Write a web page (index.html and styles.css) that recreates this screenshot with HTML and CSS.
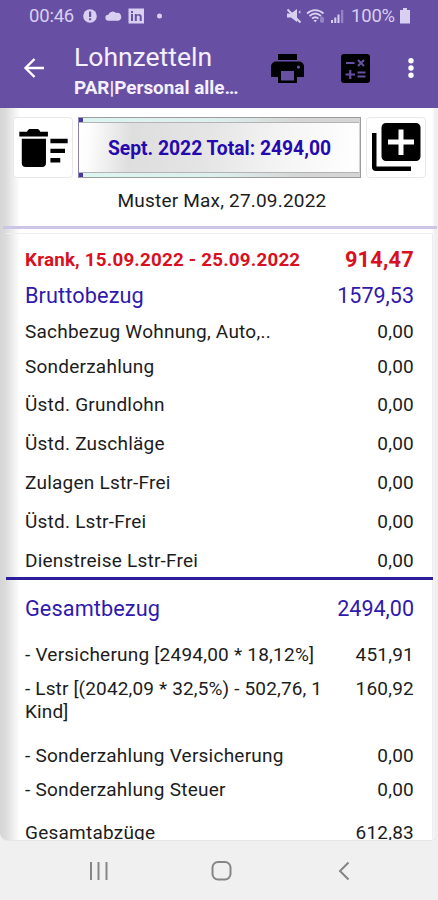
FILE: index.html
```html
<!DOCTYPE html>
<html lang="de">
<head>
<meta charset="utf-8">
<meta name="viewport" content="width=device-width, initial-scale=1">
<title>Lohnzetteln</title>
<link rel="stylesheet" href="styles.css">
</head>
<body>
<header class="top">
  <div class="status">
    <span class="clock">00:46</span>
    <svg class="notices" width="84" height="18" viewBox="0 0 84 18">
      <circle cx="7" cy="9" r="6.8"/><path class="cut" d="M6 4.500h2.200v5.500H6zM6 11.300h2.200v2H6z"/>
      <path d="M25.500 13.500a3.300 3.300 0 0 1-.2-6.600 5.300 5.300 0 0 1 8.800-1.800 4.300 4.300 0 0 1 2.400 8.400z" transform="translate(2.500 1.500) scale(.9)"/>
      <path d="M45.500 1.500h15.500v15H45.500z"/><path class="cut" d="M48 7h2v7h-2zM48 4h2v2h-2zM51.800 7h2v1c1.200-1.700 4.900-1.500 4.900 1.800V14h-2v-3.900c0-2-2.900-2-2.900 0V14h-2z"/>
      <circle cx="76.500" cy="9" r="2.500"/>
    </svg>
    <svg class="signals" width="60" height="18" viewBox="0 0 60 18">
      <path d="M1 6.500h4L11 2v13l-6-4.500H1z"/><path class="slash" d="M1.500 2.500l13 13"/><path d="M12.500 5l1.800-1.800v3.600z"/>
      <g class="wave"><path d="M21 6.500c5-4.600 11.500-4.600 16.500 0M23.500 9c3.500-3 8-3 11.500 0M26 11.500c2-1.600 4.500-1.600 6.500 0"/></g>
      <path d="M27.500 13h3.500l-1.800 2.500z"/><path class="dim" d="M34 11l2-2 2 2v4l-2 1-2-1z"/>
      <path d="M45 13h2v3h-2zM48.300 10.500h2V16h-2zM51.500 7.500h2V16h-2z"/><path class="dim" d="M55 3h2.300v13H55z"/>
    </svg>
    <span class="percent">100%</span>
    <svg class="battery" width="10" height="16" viewBox="0 0 10 16"><path d="M3 0h4v2h3v13.500H0V2h3z"/></svg>
  </div>
  <div class="appbar">
    <svg class="back" width="22" height="22" viewBox="0 0 22 22"><path d="M21 11H2.500M11.500 2L2.500 11l9 9"/></svg>
    <div class="titles">
      <h1>Lohnzetteln</h1>
      <p>PAR|Personal alle…</p>
    </div>
    <svg class="print" width="33" height="30" viewBox="0 0 33 30">
      <path d="M7 0h19v6H7z"/><path fill-rule="evenodd" d="M5 7.500h23a5 5 0 0 1 5 5V23h-7v6H7v-6H0V12.500a5 5 0 0 1 5-5zM10 17v9.500h13V17zM27.500 11.500a1.600 1.600 0 1 0 0 3.200 1.600 1.600 0 0 0 0-3.200z"/>
    </svg>
    <svg class="calc" width="29" height="29" viewBox="0 0 29 29">
      <rect width="29" height="29" rx="3"/><path d="M5 9h8.500M17 6l6 6M23 6l-6 6M4.500 20.500H14M9.250 16v9M16.500 18.500h8M16.500 22.500h8"/>
    </svg>
    <svg class="more" width="6" height="20" viewBox="0 0 6 20"><circle cx="3" cy="2.700" r="2.700"/><circle cx="3" cy="10" r="2.700"/><circle cx="3" cy="17.300" r="2.700"/></svg>
  </div>
</header>
<main class="content">
  <section class="period">
    <div class="controls">
      <button class="tool" aria-label="Löschen">
        <svg width="50" height="38" viewBox="-1 0 50 38.500"><path d="M0 2.800h8V2l2-2h9l2 2v.8h8V7.500H0zM2.500 10H27v24.500a4 4 0 0 1-4 4H6.500a4 4 0 0 1-4-4zM31.500 10H49v4.500H31.500zM31.500 20h14.800v4.200H31.500zM31.500 29.500h10V34h-10z"/></svg>
      </button>
      <button class="month"><span>Sept. 2022 Total: 2494,00</span></button>
      <button class="tool" aria-label="Hinzufügen">
        <svg width="50" height="50" viewBox="1 1 50 50"><path d="M2 11h4.500v33.500H41V49H6a4 4 0 0 1-4-4z"/><path fill-rule="evenodd" d="M16 1h30a4.500 4.500 0 0 1 4.500 4.500v29A4.500 4.500 0 0 1 46 39H16a4.500 4.500 0 0 1-4.500-4.500v-29A4.500 4.500 0 0 1 16 1zM28.500 7.500V17.500H18v5h10.500V33h5V22.500H44v-5H33.500V7.500z"/></svg>
      </button>
    </div>
    <p class="person">Muster Max, 27.09.2022</p>
  </section>
  <section class="sheet">
    <div class="row sick"><span>Krank, 15.09.2022 - 25.09.2022</span><b>914,47</b></div>
    <div class="row sum"><span>Bruttobezug</span><b>1579,53</b></div>
    <div class="row first"><span>Sachbezug Wohnung, Auto,..</span><b>0,00</b></div>
    <div class="row special"><span>Sonderzahlung</span><b>0,00</b></div>
    <div class="row"><span>Üstd. Grundlohn</span><b>0,00</b></div>
    <div class="row"><span>Üstd. Zuschläge</span><b>0,00</b></div>
    <div class="row"><span>Zulagen Lstr-Frei</span><b>0,00</b></div>
    <div class="row"><span>Üstd. Lstr-Frei</span><b>0,00</b></div>
    <div class="row last"><span>Dienstreise Lstr-Frei</span><b>0,00</b></div>
    <div class="row sum total"><span>Gesamtbezug</span><b>2494,00</b></div>
    <div class="row deduction"><span>- Versicherung [2494,00 * 18,12%]</span><b>451,91</b></div>
    <div class="row tax"><span>- Lstr [(2042,09 * 32,5%) - 502,76, 1<br>Kind]</span><b>160,92</b></div>
    <div class="row deduction"><span>- Sonderzahlung Versicherung</span><b>0,00</b></div>
    <div class="row deduction"><span>- Sonderzahlung Steuer</span><b>0,00</b></div>
    <div class="row result"><span>Gesamtabzüge</span><b>612,83</b></div>
  </section>
</main>
<nav class="navbar">
  <svg width="20" height="20" viewBox="0 0 20 20"><path d="M2 1v18M9.500 1v18M17.500 1v18"/></svg>
  <svg width="22" height="20" viewBox="0 0 22 20"><rect x="-.5" y="1" width="18" height="17.500" rx="5.500"/></svg>
  <svg width="12" height="20" viewBox="0 0 12 20"><path d="M10.500 1.500L2 10l8.500 8.500"/></svg>
</nav>
</body>
</html>
```
FILE: styles.css
```css
* { box-sizing: border-box; }
body {
  margin: 0;
  width: 438px;
  height: 900px;
  overflow: hidden;
  display: flex;
  flex-direction: column;
  background: #f0f0f0;
  color: #1c1c1c;
  font-family: Roboto, sans-serif;
}
h1, p { margin: 0; }
.top { height: 108px; background: #6750a4; flex: none; }
.status {
  height: 32px;
  padding: 0 27px 0 29px;
  display: flex;
  align-items: center;
  color: #d9cff0;
  fill: #d9cff0;
  font-size: 18.5px;
}
.clock { width: 54px; letter-spacing: -.2px; }
.cut { fill: #6750a4; }
.slash { fill: none; stroke: #d9cff0; stroke-width: 2; }
.wave { fill: none; stroke: #d9cff0; stroke-width: 1.8; }
.dim { opacity: .4; }
.signals { margin-left: auto; }
.percent { margin-left: 5px; width: 49px; letter-spacing: -.2px; }
.battery { margin-right: 1px; }
.appbar { height: 76px; display: flex; align-items: center; padding: 0 24px 4px 23px; }
.back { fill: none; stroke: #fff; stroke-width: 2.4; }
.titles { margin-left: 29px; width: 197px; color: #f6efff; white-space: nowrap; padding-top: 4px; }
.titles h1 { font-size: 26.5px; line-height: 34px; font-weight: 400; }
.titles p { font-size: 18.9px; line-height: 27px; font-weight: 700; }
.print { margin-top: 2px; }
.calc { margin: 1px 0 0 37px; }
.calc path { stroke: #6750a4; stroke-width: 2.1; fill: none; }
.more { margin: 0 0 0 auto; fill: #fff; }
.content {
  height: 733px;
  flex: none;
  overflow: hidden;
  background: linear-gradient(90deg, #d5d5d5 0, #dcdcdc 6px, #fff 20px, #fff 432px, #efefef 435px);
  border-radius: 0 0 8px 8px;
  border-bottom: 1px solid #e6e6e6;
}
.period { height: 121px; padding-top: 9px; border-bottom: 3px solid #cdc5e5; margin: 0 1px 0 3px; }
.controls { display: flex; justify-content: space-between; padding: 0 11px 0 10px; height: 61px; }
button { font: inherit; padding: 0; margin: 0; }
.tool {
  width: 60px;
  height: 61px;
  border: 1px solid #e8e8e8;
  border-radius: 4px;
  background: #fff;
  display: flex;
  justify-content: center;
  align-items: center;
}
.month {
  width: 283px;
  height: 61px;
  border: 1px solid #9c9c9c;
  border-left-color: #8c83b5;
  background:
    linear-gradient(#4937a2, #4937a2) 0 0 / 4px 5px no-repeat,
    linear-gradient(#4937a2, #4937a2) 0 100% / 4px 5px no-repeat,
    linear-gradient(90deg, #def5f1, #dcefed 50%, #d5d5d5 80%);
  padding: 4px 1px 4px 0;
}
.month span {
  display: flex;
  height: 100%;
  align-items: center;
  justify-content: center;
  padding: 2px 0 0 1px;
  border: solid #b4b4b4;
  border-width: 1px 0;
  background: linear-gradient(96deg, #fff 0, #fdfdfd 4%, #dedede 19%, #e5e5e5 46%, #f4f4f4 72%, #fff);
  color: #2509ae;
  font-size: 19.3px;
  font-weight: 700;
  white-space: nowrap;
}
.person { text-align: center; font-size: 19px; line-height: 46px; letter-spacing: .2px; padding-left: 4px; }
.sheet {
  margin: 4px 5px 0 6px;
  border: 1px solid #eee;
  border-width: 1px 1px 0 0;
  padding: 8px 18px 0 19px;
  height: 610px;
}
.row {
  height: 39px;
  display: flex;
  justify-content: space-between;
  align-items: center;
  font-size: 19px;
  letter-spacing: .23px;
  white-space: nowrap;
}
.row b { font-weight: 400; }
.sick { height: 35px; color: #d81021; font-size: 18.8px; letter-spacing: .2px; }
.sick span, .sick b { font-weight: 700; }
.sick b { font-size: 21.8px; }
.sum { height: 37px; color: #3019ae; font-size: 21.7px; letter-spacing: .1px; }
.sum b { font-size: 21.5px; letter-spacing: 0; }
.first { height: 35px; }
.special { height: 34px; margin-bottom: 2px; }
.last { height: 36px; padding-top: 2px; }
.total {
  height: 60px;
  margin: 0 -19px 0 -19px;
  padding: 0 19px 0 19px;
  border-top: 3px solid #2c1d9b;
}
.deduction { height: 34px; }
.tax { height: 67px; align-items: flex-start; line-height: 23px; padding-top: 6px; }
.tax span { letter-spacing: .15px; }
.result { height: 52px; }
.navbar { flex: 1; display: flex; align-items: center; padding: 1px 88px 0 89px; justify-content: space-between; }
.navbar svg { fill: none; stroke: #858585; stroke-width: 2; overflow: visible; }
```
